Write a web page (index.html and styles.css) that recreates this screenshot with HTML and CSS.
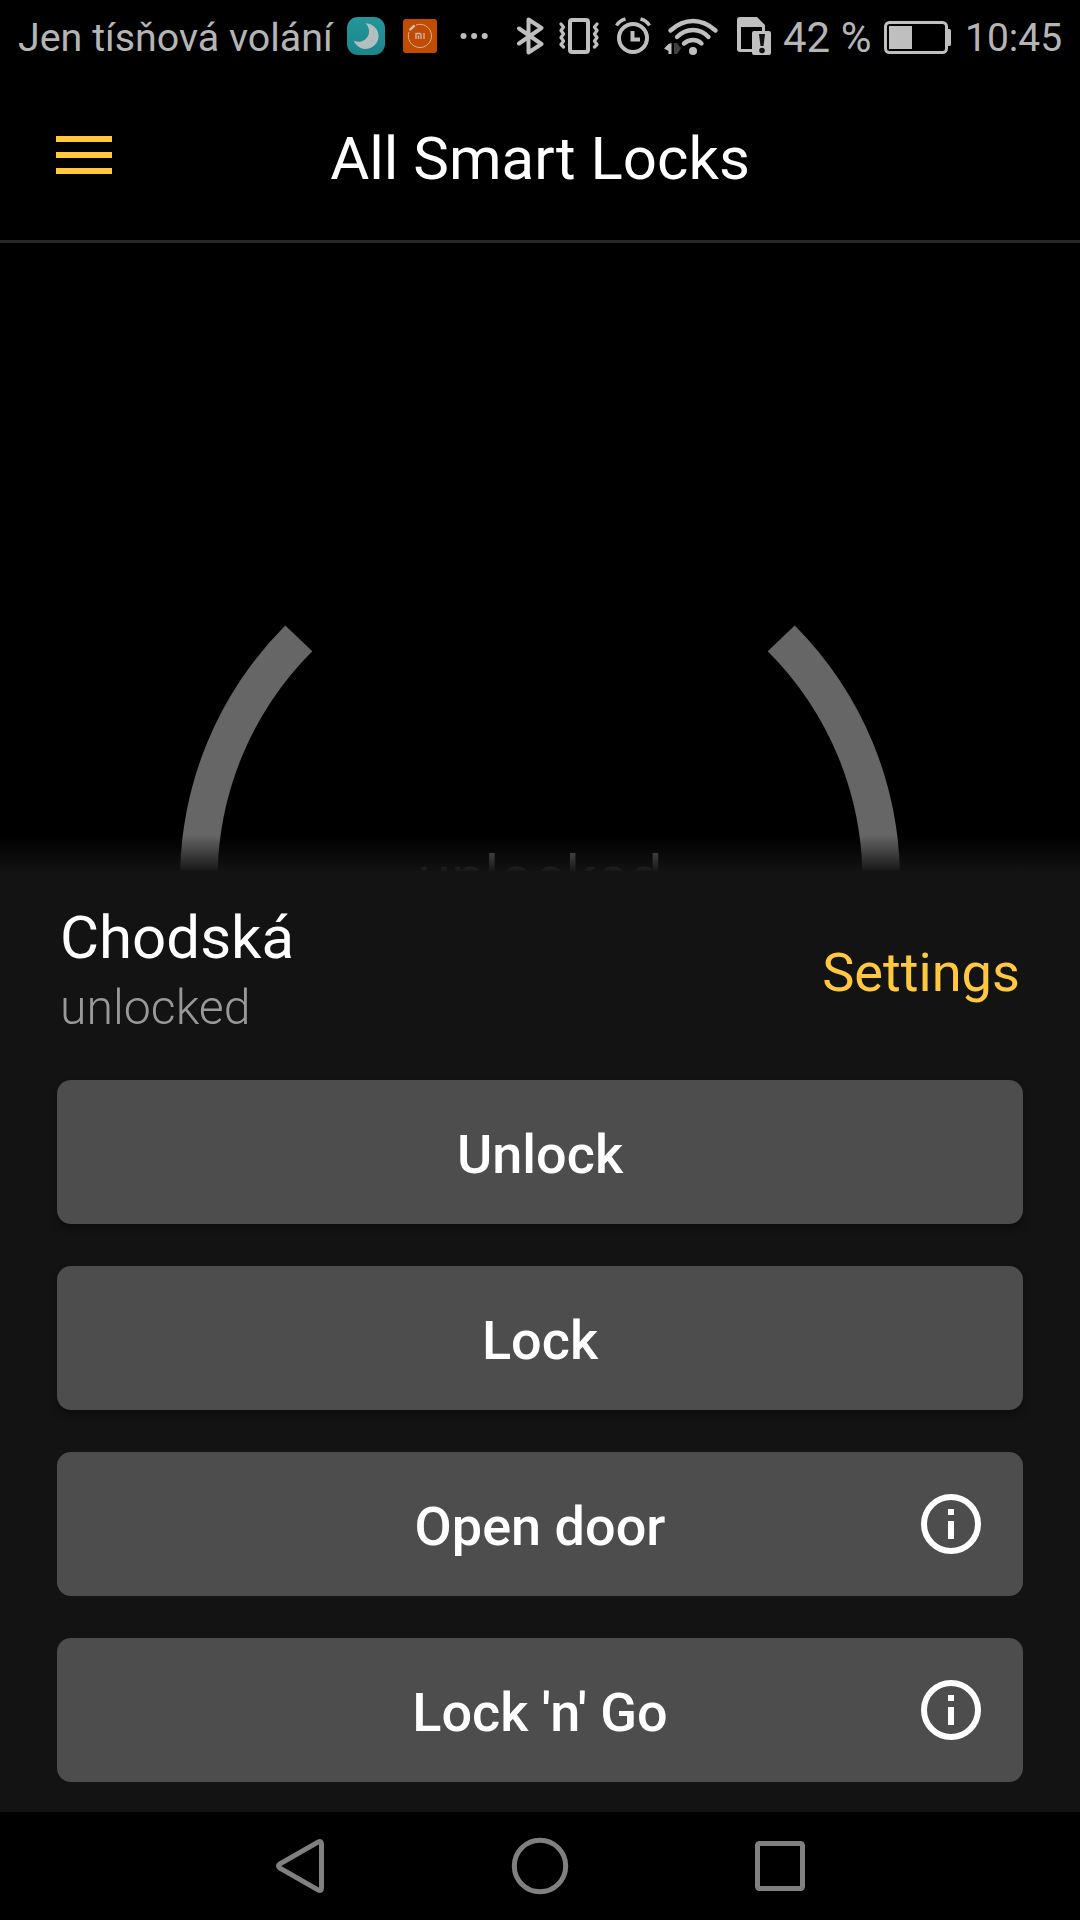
FILE: index.html
```html
<!DOCTYPE html>
<html lang="en">
<head>
<meta charset="utf-8">
<title>All Smart Locks</title>
<link rel="stylesheet" href="styles.css">
</head>
<body>
<div class="screen">
  <div class="status">
    <span class="carrier" lang="cs">Jen tísňová volání</span>
    <svg class="moon" width="38" height="38" viewBox="0 0 38 38">
      <defs><linearGradient id="teal" x1="0" y1="0" x2="0" y2="1"><stop offset="0" stop-color="#249699"/><stop offset="1" stop-color="#1a868d"/></linearGradient></defs>
      <rect width="38" height="38" rx="11" fill="url(#teal)"/>
      <path d="M18.500 6.300A12.800 12.800 0 1 1 6.700 23.500A10.500 10.500 0 0 0 18.500 6.300Z" fill="#b3bfbf"/>
    </svg>
    <svg class="mi" width="34" height="34" viewBox="0 0 34 34">
      <rect width="34" height="34" rx="3" fill="#c24b00"/>
      <path d="M13 6A11.600 11.600 0 1 1 6 13" fill="none" stroke="#c5b5ad" stroke-width="1"/>
      <path d="M7.200 10.500L11 7" stroke="#c8bfba" stroke-width="2.400" stroke-linecap="round"/>
      <path d="M13 20V14.500H17Q18 14.500 18 16V20M15.500 16.500V20M21 14V20" fill="none" stroke="#c5b5ad" stroke-width="1.400"/>
    </svg>
    <svg class="more" width="28" height="8" viewBox="0 0 28 8"><g fill="#bdbdbd"><circle cx="3.500" cy="4" r="3"/><circle cx="14.100" cy="4" r="3"/><circle cx="24.700" cy="4" r="3"/></g></svg>
    <svg class="bluetooth" width="28" height="38" viewBox="0 0 28 38"><path d="M3 11.500L25.500 27L12.500 35.500V2.500L25.500 11L3 26.500" fill="none" stroke="#bfbfbf" stroke-width="4" stroke-linecap="round" stroke-linejoin="round"/></svg>
    <svg class="vibrate" width="40" height="38" viewBox="0 0 40 38">
      <g fill="none" stroke="#bfbfbf"><rect x="11" y="3" width="18" height="32" rx="2" stroke-width="4"/>
      <path d="M2 7L4.500 10L2 13.500L4.500 17L2 20.500L4.500 24L2 27.500L4.500 30M38 7L35.500 10L38 13.500L35.500 17L38 20.500L35.500 24L38 27.500L35.500 30" stroke-width="3.200" stroke-linejoin="round" stroke-linecap="round"/></g>
    </svg>
    <svg class="alarm" width="36" height="38" viewBox="0 0 36 38"><g fill="none" stroke="#bfbfbf">
      <circle cx="18" cy="21" r="14" stroke-width="4"/><path d="M17.500 14V22.500H25" stroke-width="4"/>
      <path d="M1.500 8.500Q4.500 3.500 10.500 2M34.500 8.500Q31.500 3.500 25.500 2" stroke-width="3.400"/></g></svg>
    <svg class="wifi" width="56" height="38" viewBox="0 0 56 38">
      <g fill="none" stroke="#bfbfbf" stroke-width="4.400" stroke-linecap="round"><path d="M6.500 13.500Q17 4 29 4T51.500 13.500M13 20Q20 13 29 13T44.500 20M20 26.500Q24 23 29 23T37.500 26.500"/></g>
      <circle cx="29" cy="34" r="4" fill="#bfbfbf"/><path d="M7.500 26V37H4.500V34L0 31.500L4.500 27Z" fill="#bfbfbf"/><path d="M10 26V37H13L17 31.500L13 26Z" fill="#404040"/>
    </svg>
    <svg class="sim" width="34" height="38" viewBox="0 0 34 38">
      <path d="M1 2Q1 0 3 0H20L28 8V14H25V10H4V32H15V35H3Q0 35 0 32V3Q0 0 3 0Z" fill="#bfbfbf"/>
      <rect x="15" y="14" width="19" height="24" rx="2" fill="#bfbfbf"/><path d="M22 17H28L26.500 29H23.500Z" fill="#111"/><circle cx="25" cy="33.500" r="2.800" fill="#111"/>
    </svg>
    <span class="percent">42 %</span>
    <svg class="battery" width="68" height="33" viewBox="0 0 68 33">
      <rect x="1.500" y="1.500" width="61" height="30" rx="4" fill="none" stroke="#bfbfbf" stroke-width="3"/><path d="M64 8H65.500Q67 8 67 10V23Q67 25 65.500 25H64Z" fill="#bfbfbf"/><rect x="5" y="5" width="23" height="23" fill="#bfbfbf"/>
    </svg>
    <span class="clock">10:45</span>
  </div>

  <header class="topbar">
    <div class="menu"><i></i><i></i><i></i></div>
    <h1 class="title">All Smart Locks</h1>
  </header>

  <main class="stage">
    <svg class="dial" width="1080" height="628" viewBox="0 243 1080 628">
      <g fill="#666">
        <path d="M285.300 625.500A360 360 0 0 0 180 880H217.500A322.500 322.500 0 0 1 312.300 651.200Z"/>
        <path d="M794.700 625.500A360 360 0 0 1 900 880H862.500A322.500 322.500 0 0 0 767.700 651.200Z"/>
      </g>
      <text class="dial-text" x="540" y="899" text-anchor="middle">unlocked</text>
    </svg>
    <div class="fade"></div>
  </main>

  <section class="sheet">
    <div class="lock-head">
      <div><div class="lock-name" lang="cs">Chodská</div><div class="lock-state">unlocked</div></div>
      <a class="settings">Settings</a>
    </div>
    <div class="actions">
      <div class="action raised">Unlock</div>
      <div class="action raised">Lock</div>
      <div class="action">Open door
        <svg class="info" width="60" height="60" viewBox="0 0 60 60"><circle cx="30" cy="30" r="27" fill="none" stroke="#fff" stroke-width="6"/><path d="M27 15h6v6h-6zM27 27h6v18h-6z" fill="#fff"/></svg>
      </div>
      <div class="action">Lock 'n' Go
        <svg class="info" width="60" height="60" viewBox="0 0 60 60"><circle cx="30" cy="30" r="27" fill="none" stroke="#fff" stroke-width="6"/><path d="M27 15h6v6h-6zM27 27h6v18h-6z" fill="#fff"/></svg>
      </div>
    </div>
  </section>

  <nav class="navbar">
    <svg width="60" height="60" viewBox="0 0 60 60"><path d="M48 6.200Q51.500 4.200 51.500 8V52Q51.500 55.800 48 53.800L10 32.200Q7 30 10 27.800Z"/></svg>
    <svg width="60" height="60" viewBox="0 0 60 60"><circle cx="30" cy="30" r="25.700"/></svg>
    <svg width="60" height="60" viewBox="0 0 60 60"><rect x="7.500" y="7.500" width="45" height="45" rx="2"/></svg>
  </nav>
</div>
</body>
</html>
```

FILE: styles.css
```css
* { box-sizing: border-box; }
body { margin: 0; background: #000; }
svg { display: block; flex: none; }
.screen {
  width: 1080px;
  height: 1920px;
  overflow: hidden;
  display: flex;
  flex-direction: column;
  background: #000;
  color: #fff;
  font-family: Roboto, "Liberation Sans", sans-serif;
}

/* Status bar */
.status { height: 72px; display: flex; align-items: center; color: #b5b5b5; white-space: nowrap; }
.status span { flex: none; }
.carrier { width: 329px; margin-left: 18px; padding-top: 3px; font-size: 39.4px; }
.mi { margin-left: 18px; }
.more { margin-left: 23px; }
.bluetooth { margin-left: 28px; }
.vibrate { margin-left: 15px; }
.alarm { margin-left: 16px; }
.wifi { margin-left: 13px; }
.sim { margin-left: 17px; }
.percent { width: 99px; margin-left: 12px; padding-top: 3px; font-size: 42px; }
.battery { margin: 3px 0 0 2px; }
.clock { margin-left: 13px; padding-top: 3px; font-size: 39px; }

/* Title bar */
.topbar { height: 171px; display: flex; align-items: center; border-bottom: 3px solid #282828; }
.menu { width: 56px; margin: 0 0 2px 56px; display: grid; gap: 10px; }
.menu i { height: 6px; background: #ffc83d; }
.title { flex: 1; margin: 0 112px 0 0; padding-top: 5px; text-align: center; font-size: 60px; font-weight: 400; }

/* Lock dial */
.stage { position: relative; height: 628px; overflow: hidden; }
.dial-text { font-size: 60.8px; fill: #666; }
.fade { position: absolute; left: 0; right: 0; bottom: 0; height: 36px; background: linear-gradient(rgba(19,19,19,0), rgba(19,19,19,.95)); }

/* Action sheet */
.sheet { height: 941px; padding: 32px 57px 0; background: #131313; }
.lock-head { height: 140px; padding: 0 3px; display: flex; justify-content: space-between; align-items: center; }
.lock-name { font-size: 60px; line-height: 70px; }
.lock-state { font-size: 48.2px; line-height: 70px; font-weight: 300; color: #999; }
.settings { padding-bottom: 2px; font-size: 54.2px; color: #ffc83d; }
.actions { margin-top: 37px; display: grid; gap: 42px; }
.action {
  position: relative;
  height: 144px;
  padding-top: 5px;
  display: flex;
  align-items: center;
  justify-content: center;
  border-radius: 14px;
  background: #4d4d4d;
  font-size: 54px;
  font-weight: 500;
}
.raised { box-shadow: 0 5px 7px rgba(0,0,0,.35); }
.info { position: absolute; right: 42px; top: 42px; }

/* System navigation */
.navbar { height: 108px; padding: 0 270px; display: flex; justify-content: space-between; align-items: center; }
.navbar svg { fill: none; stroke: #808080; stroke-width: 5; }
```
